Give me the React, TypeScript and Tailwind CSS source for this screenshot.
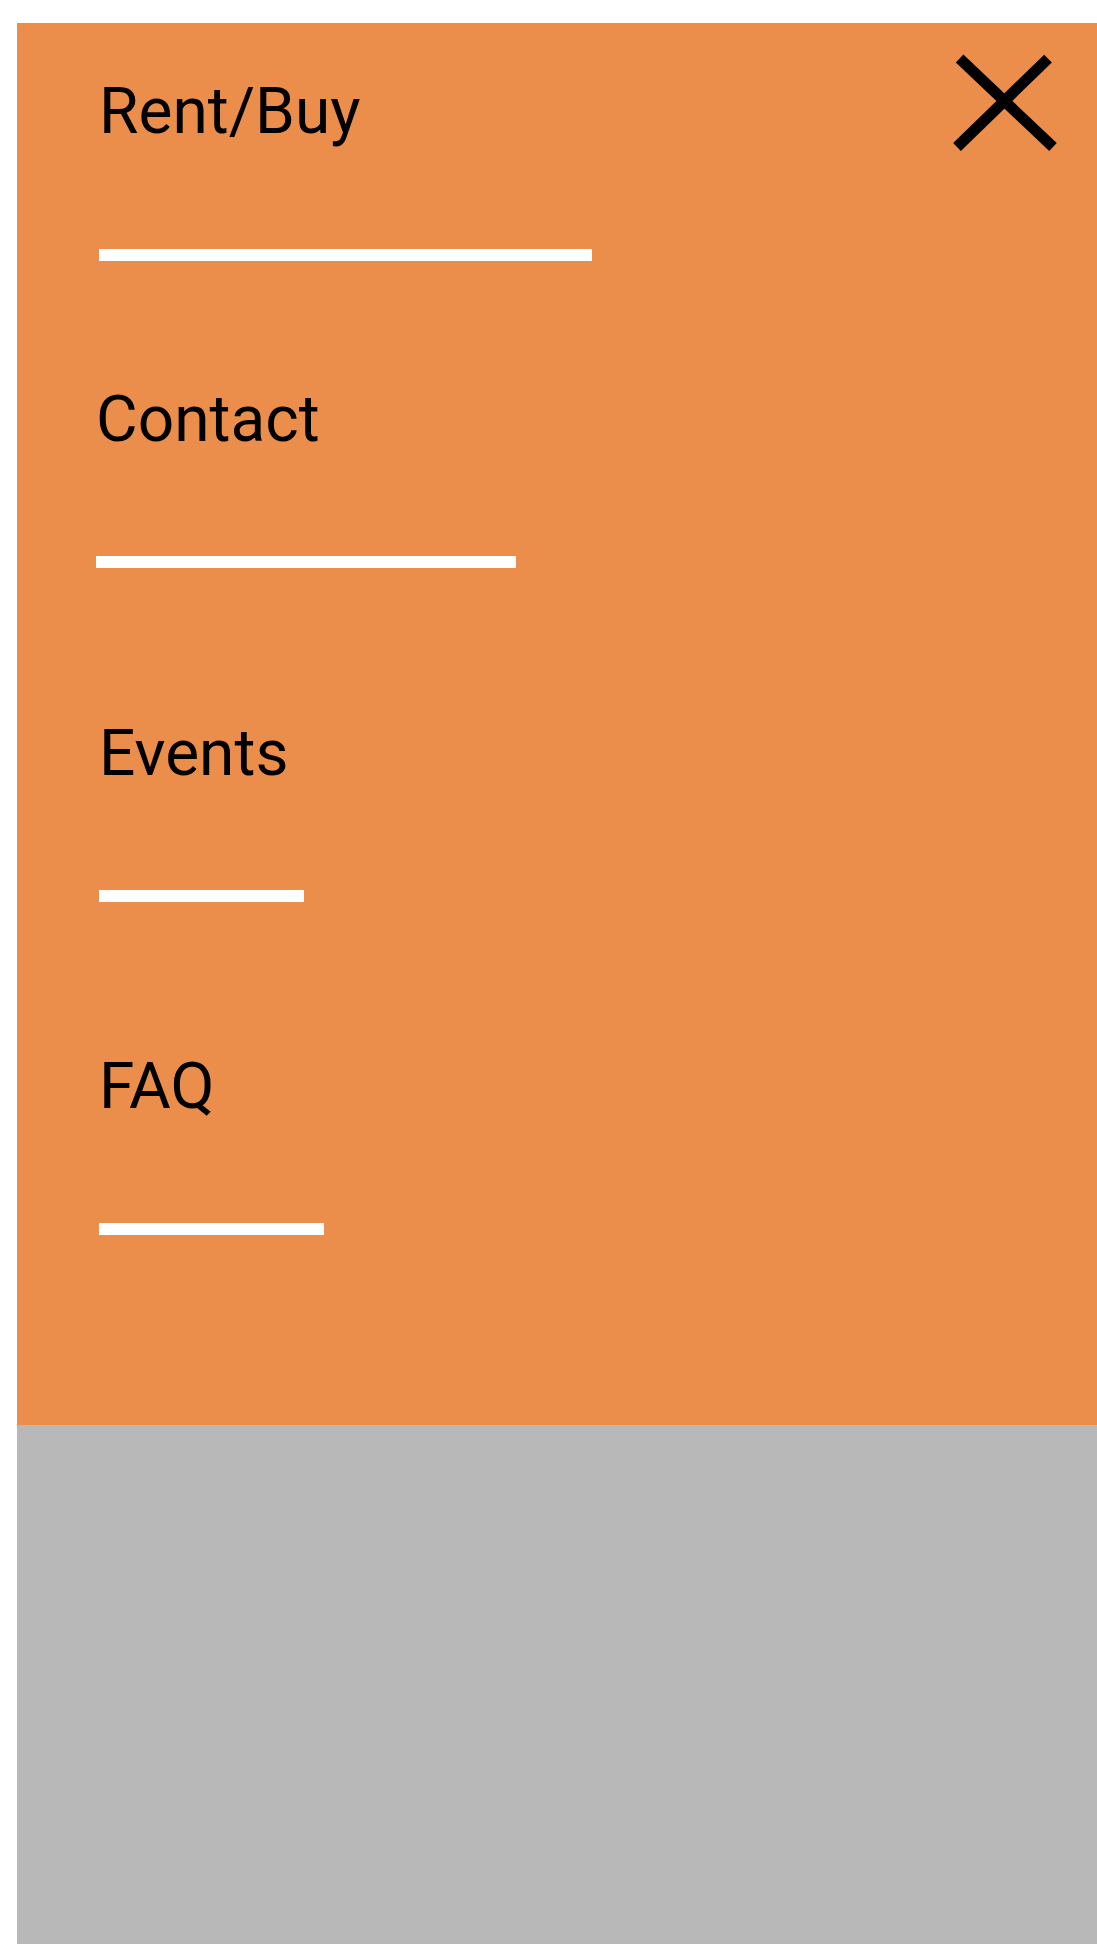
import React from "react";

const items = [
  { label: "Rent/Buy", w: "w-[493px]", ml: "ml-0", mt: "mt-[57px]", ulmt: "mt-[105px]" },
  { label: "Contact", w: "w-[420px]", ml: "-ml-[3px]", mt: "mt-[127px]", ulmt: "mt-[104px]" },
  { label: "Events", w: "w-[205px]", ml: "ml-0", mt: "mt-[154px]", ulmt: "mt-[104px]" },
  { label: "FAQ", w: "w-[225px]", ml: "ml-0", mt: "mt-[153px]", ulmt: "mt-[104px]" },
];

export default function App() {
  return (
    <div className="min-h-[1944px] bg-white pl-[17px] pt-[23px]" style={{ fontFamily: "Roboto, 'Liberation Sans', sans-serif" }}>
      <nav className="relative bg-[#eb8e4c] pl-[82px] pb-[190px] flex flex-col">
        {items.map((it) => (
          <div key={it.label} className={`flex flex-col ${it.mt} ${it.ml}`}>
            <a href="#" className="block text-[64px] leading-none text-black">
              {it.label}
            </a>
            <div className={`${it.ulmt} h-[12px] bg-white ${it.w}`} />
          </div>
        ))}
        <button aria-label="Close" className="absolute left-[933px] top-[27px] w-[112px] h-[106px]">
          <svg width="112" height="106" viewBox="0 0 112 106">
            <line x1="9.6" y1="8.6" x2="103" y2="97" stroke="#000" strokeWidth="11" strokeLinecap="butt" />
            <line x1="98" y1="8.6" x2="7" y2="97" stroke="#000" strokeWidth="11" strokeLinecap="butt" />
          </svg>
        </button>
      </nav>
      <div className="h-[519px] bg-[#b8b8b8]" />
    </div>
  );
}
